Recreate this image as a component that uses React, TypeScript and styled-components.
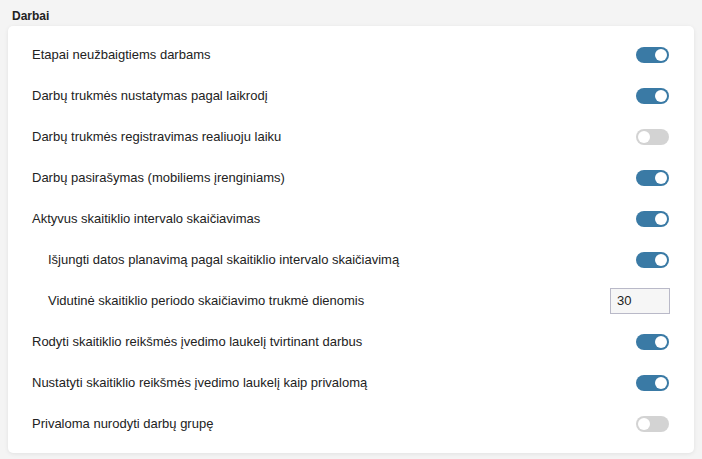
import React from "react";
import styled, { createGlobalStyle } from "styled-components";

const Global = createGlobalStyle`
  html, body { margin: 0; padding: 0; background: #f4f4f4; }
  body { font-family: "Liberation Sans", Arial, sans-serif; color: #222; }
`;

const Page = styled.div`
  padding: 7px 8px 7px 8px;
  width: 686px;
`;

const Title = styled.div`
  font-size: 12px;
  font-weight: bold;
  color: #222;
  padding-left: 4px;
  height: 19px;
  line-height: 19px;
`;

const Card = styled.div`
  background: #fff;
  border-radius: 5px;
  box-shadow: 0 1px 4px rgba(0, 0, 0, 0.08);
  padding: 8px 24px 9px 24px;
  display: flex;
  flex-direction: column;
`;

const Row = styled.div<{ $indent?: boolean }>`
  display: flex;
  align-items: center;
  justify-content: space-between;
  height: 41px;
  padding-left: ${(p) => (p.$indent ? "16px" : "0")};
`;

const Label = styled.span`
  font-size: 13px;
  color: #222;
`;

const Track = styled.span<{ $on: boolean }>`
  position: relative;
  display: inline-block;
  width: 33px;
  height: 16px;
  border-radius: 8px;
  margin-right: 1px;
  background: ${(p) => (p.$on ? "#3a7aa5" : "#d3d3d3")};
  &::after {
    content: "";
    position: absolute;
    top: 2px;
    left: ${(p) => (p.$on ? "19px" : "2px")};
    width: 12px;
    height: 12px;
    border-radius: 50%;
    background: #fff;
  }
`;

const NumInput = styled.input`
  box-sizing: border-box;
  width: 60px;
  height: 26px;
  border: 1px solid #b9b9c8;
  background: #f6f6f6;
  font-family: "Liberation Sans", Arial, sans-serif;
  font-size: 13px;
  color: #222;
  padding: 0 6px;
  outline: none;
`;

type Item = { label: string; on?: boolean; indent?: boolean; input?: string };

const items: Item[] = [
  { label: "Etapai neužbaigtiems darbams", on: true },
  { label: "Darbų trukmės nustatymas pagal laikrodį", on: true },
  { label: "Darbų trukmės registravimas realiuoju laiku", on: false },
  { label: "Darbų pasirašymas (mobiliems įrenginiams)", on: true },
  { label: "Aktyvus skaitiklio intervalo skaičiavimas", on: true },
  { label: "Išjungti datos planavimą pagal skaitiklio intervalo skaičiavimą", on: true, indent: true },
  { label: "Vidutinė skaitiklio periodo skaičiavimo trukmė dienomis", indent: true, input: "30" },
  { label: "Rodyti skaitiklio reikšmės įvedimo laukelį tvirtinant darbus", on: true },
  { label: "Nustatyti skaitiklio reikšmės įvedimo laukelį kaip privalomą", on: true },
  { label: "Privaloma nurodyti darbų grupę", on: false },
];

export default function App() {
  return (
    <>
      <Global />
      <Page>
        <Title>Darbai</Title>
        <Card>
          {items.map((it, i) => (
            <Row key={i} $indent={it.indent}>
              <Label>{it.label}</Label>
              {it.input !== undefined ? (
                <NumInput defaultValue={it.input} />
              ) : (
                <Track $on={!!it.on} />
              )}
            </Row>
          ))}
        </Card>
      </Page>
    </>
  );
}
